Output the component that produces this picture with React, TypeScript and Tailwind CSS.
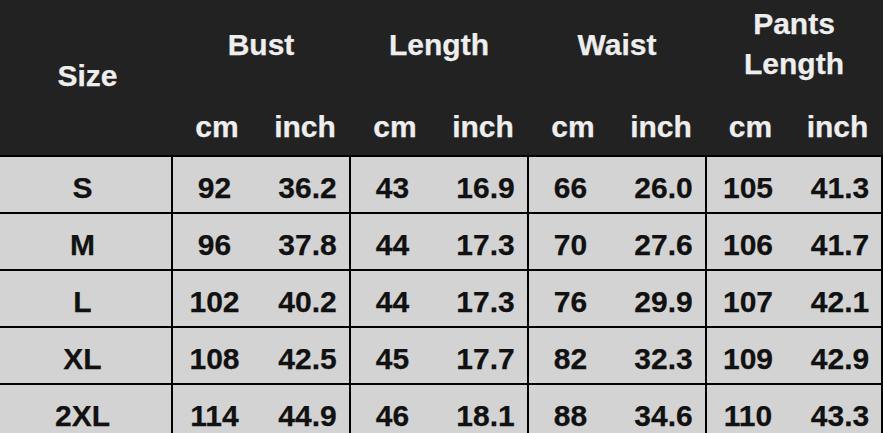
import React from "react";

const groups = ["Bust", "Length", "Waist", "Pants Length"];
const rows: [string, string[]][] = [
  ["S", ["92", "36.2", "43", "16.9", "66", "26.0", "105", "41.3"]],
  ["M", ["96", "37.8", "44", "17.3", "70", "27.6", "106", "41.7"]],
  ["L", ["102", "40.2", "44", "17.3", "76", "29.9", "107", "42.1"]],
  ["XL", ["108", "42.5", "45", "17.7", "82", "32.3", "109", "42.9"]],
  ["2XL", ["114", "44.9", "46", "18.1", "88", "34.6", "110", "43.3"]],
];

const font = { fontFamily: '"Liberation Sans", Arial, sans-serif' };

export default function App() {
  return (
    <div
      className="w-[883px] h-[433px] overflow-hidden bg-[#d3d3d3] text-[30px] font-bold [-webkit-text-stroke:0.25px_currentColor]"
      style={font}
    >
      {/* Header */}
      <div className="flex h-[157px] bg-[#222222] text-[#eeeeee] border-b-2 border-black">
        <div className="w-[171px] flex items-center justify-center pb-[4px] pl-[4px] shrink-0">Size</div>
        {groups.map((g, i) => (
          <div
            key={g}
            className={`flex flex-col shrink-0 ${i === 3 ? "w-[178px] pl-[2px] pr-[2px]" : "w-[178px] pl-[2px]"}`}
          >
            <div className="h-[88px] flex flex-col items-center justify-center text-center">
              {g === "Pants Length" ? (
                <>
                  <div className="leading-[40px]">Pants</div>
                  <div className="leading-[40px]">Length</div>
                </>
              ) : (
                <div>{g}</div>
              )}
            </div>
            <div className="h-[67px] flex pt-[9px]">
              <div className="flex-1 flex items-center justify-center">cm</div>
              <div className="flex-1 flex items-center justify-center">inch</div>
            </div>
          </div>
        ))}
      </div>
      {/* Body */}
      {rows.map(([size, vals]) => (
        <div key={size} className="flex h-[57px] border-b-2 border-black text-[#111111]">
          <div className="w-[171px] shrink-0 flex items-center justify-center pt-[5px] pr-[6px]">{size}</div>
          {[0, 1, 2, 3].map((gi) => (
            <div
              key={gi}
              className={`w-[178px] shrink-0 flex border-l-2 border-black ${gi === 3 ? "border-r-2" : ""}`}
            >
              <div className="flex-1 flex items-center justify-center pt-[5px] pr-[10px]">{vals[gi * 2]}</div>
              <div className="flex-1 flex items-center justify-center pt-[5px]">{vals[gi * 2 + 1]}</div>
            </div>
          ))}
        </div>
      ))}
    </div>
  );
}
